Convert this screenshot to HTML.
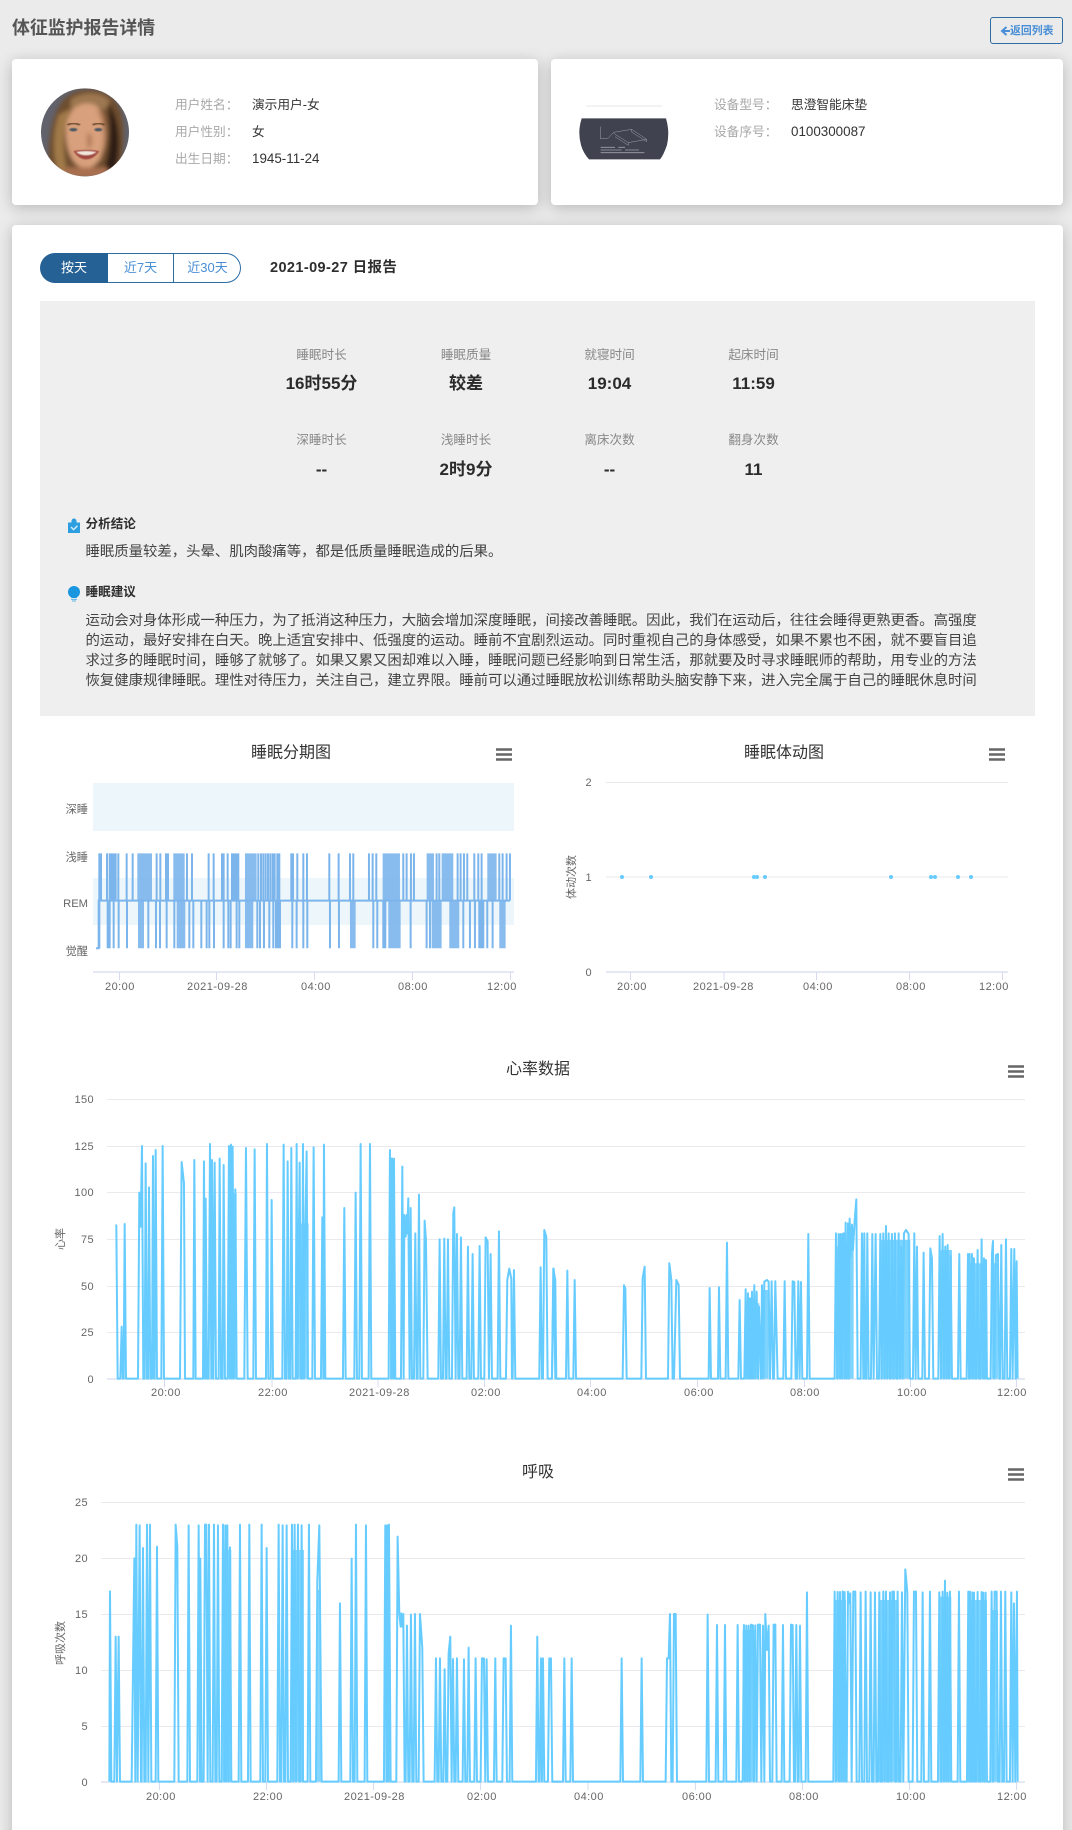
<!DOCTYPE html>
<html lang="zh"><head><meta charset="utf-8"><title>体征监护报告详情</title>
<style>
html,body{margin:0;padding:0;width:1072px;height:1830px;overflow:hidden;background:#ebebeb}
body{position:relative;font-family:"Liberation Sans","Noto Sans CJK SC",sans-serif;color:#333}
.card{position:absolute;background:#fff;border-radius:4px;box-shadow:0 3px 15px rgba(0,0,0,.22)}
.t{position:absolute;white-space:nowrap;line-height:20px;height:20px}
.c{transform:translateX(-50%)}
.lb{color:#a8a8a8;font-size:12.7px}
.v{color:#333;font-size:12.7px}
.n{font-size:13.4px}
.pl{color:#888;font-size:12.6px}
.pv{color:#2b2b2b;font-size:17px;font-weight:700}
.ph{color:#2e2e2e;font-size:12.6px;font-weight:700}
.pt{color:#444;font-size:14.39px}
svg{position:absolute;left:0;top:0}
svg text{font-family:"Liberation Sans","Noto Sans CJK SC",sans-serif}
.tk{font-size:11px;fill:#666;letter-spacing:.45px}
.yl{font-size:11px;fill:#666;text-anchor:end;letter-spacing:.4px}
.ti{font-size:16px;fill:#333;text-anchor:middle}
.ys{font-size:11px;fill:#666;text-anchor:middle}
.l{fill:none;stroke:#66ccff;stroke-width:2;stroke-linejoin:round}
.s{fill:none;stroke:#7cb5ec;stroke-width:2}
.g{stroke:#e9e9ee;stroke-width:1}
.a{stroke:#dbe2f1;stroke-width:1.5}
.k{stroke:#d5dcee;stroke-width:1}
.m{stroke:#666;stroke-width:2.6}
</style></head><body>

<div class="t" style="left:12px;top:16px;height:24px;line-height:24px;font-size:17.9px;font-weight:700;color:#555">体征监护报告详情</div>
<div style="position:absolute;left:990px;top:17px;width:71px;height:25px;border:1px solid #2e6da4;border-radius:3px"></div>
<div class="t" style="left:1010px;top:21px;font-size:10.9px;font-weight:700;color:#4a8fd6">返回列表</div>

<div class="card" style="left:12px;top:59px;width:526px;height:146px"></div>
<div class="card" style="left:551px;top:59px;width:512px;height:146px"></div>
<div class="card" style="left:12px;top:225px;width:1051px;height:1640px"></div>

<div class="t lb" style="left:175px;top:95px">用户姓名：</div><div class="t v" style="left:252px;top:95px">演示用户-女</div>
<div class="t lb" style="left:175px;top:122px">用户性别：</div><div class="t v" style="left:252px;top:122px">女</div>
<div class="t lb" style="left:175px;top:149px">出生日期：</div><div class="t v n" style="left:252px;top:149px">1945-11-24</div>
<div class="t lb" style="left:714px;top:95px">设备型号：</div><div class="t v" style="left:791px;top:95px">思澄智能床垫</div>
<div class="t lb" style="left:714px;top:122px">设备序号：</div><div class="t v n" style="left:791px;top:122px">0100300087</div>

<div style="position:absolute;left:40px;top:253px;width:68px;height:30px;background:#266195;border-radius:15px 0 0 15px"></div>
<div style="position:absolute;left:108px;top:253px;width:132px;height:28px;border:1px solid #2e6da4;border-left:0;border-radius:0 15px 15px 0"></div>
<div style="position:absolute;left:173px;top:253px;width:1px;height:30px;background:#2e6da4"></div>
<div class="t c" style="left:74px;top:258px;font-size:13px;color:#fff">按天</div>
<div class="t c" style="left:140.5px;top:258px;font-size:13px;color:#4a8fd6">近7天</div>
<div class="t c" style="left:207.5px;top:258px;font-size:13px;color:#4a8fd6">近30天</div>
<div class="t" style="left:270px;top:258px;font-size:14.5px;font-weight:700;color:#2e2e2e;letter-spacing:.4px">2021-09-27 日报告</div>

<div style="position:absolute;left:40px;top:301px;width:995px;height:415px;background:#efefef"></div>
<div class="t c pl" style="left:321.5px;top:345px">睡眠时长</div><div class="t c pv" style="left:321.5px;top:374px">16时55分</div>
<div class="t c pl" style="left:466px;top:345px">睡眠质量</div><div class="t c pv" style="left:466px;top:374px">较差</div>
<div class="t c pl" style="left:609.5px;top:345px">就寝时间</div><div class="t c pv" style="left:609.5px;top:374px">19:04</div>
<div class="t c pl" style="left:753.5px;top:345px">起床时间</div><div class="t c pv" style="left:753.5px;top:374px">11:59</div>
<div class="t c pl" style="left:321.5px;top:430px">深睡时长</div><div class="t c pv" style="left:321.5px;top:460px">--</div>
<div class="t c pl" style="left:466px;top:430px">浅睡时长</div><div class="t c pv" style="left:466px;top:460px">2时9分</div>
<div class="t c pl" style="left:609.5px;top:430px">离床次数</div><div class="t c pv" style="left:609.5px;top:460px">--</div>
<div class="t c pl" style="left:753.5px;top:430px">翻身次数</div><div class="t c pv" style="left:753.5px;top:460px">11</div>

<div class="t ph" style="left:85.5px;top:514px">分析结论</div>
<div class="t pt" style="left:85.5px;top:542px">睡眠质量较差，头晕、肌肉酸痛等，都是低质量睡眠造成的后果。</div>
<div class="t ph" style="left:85.5px;top:582px">睡眠建议</div>
<div class="t pt" style="left:85.5px;top:611px">运动会对身体形成一种压力，为了抵消这种压力，大脑会增加深度睡眠，间接改善睡眠。因此，我们在运动后，往往会睡得更熟更香。高强度</div>
<div class="t pt" style="left:85.5px;top:631px">的运动，最好安排在白天。晚上适宜安排中、低强度的运动。睡前不宜剧烈运动。同时重视自己的身体感受，如果不累也不困，就不要盲目追</div>
<div class="t pt" style="left:85.5px;top:651px">求过多的睡眠时间，睡够了就够了。如果又累又困却难以入睡，睡眠问题已经影响到日常生活，那就要及时寻求睡眠师的帮助，用专业的方法</div>
<div class="t pt" style="left:85.5px;top:671px">恢复健康规律睡眠。理性对待压力，关注自己，建立界限。睡前可以通过睡眠放松训练帮助头脑安静下来，进入完全属于自己的睡眠休息时间</div>

<svg width="1072" height="1830" viewBox="0 0 1072 1830">
<defs>
<clipPath id="av"><circle cx="165" cy="187" r="132"/></clipPath>
<filter id="bl" x="-20%" y="-20%" width="140%" height="140%"><feGaussianBlur stdDeviation="6"/></filter>
<filter id="bl2"><feGaussianBlur stdDeviation="1.5"/></filter>
</defs>

<!-- back arrow -->
<path d="M1010 31H1003M1006.5 27L1002 31L1006.5 35" fill="none" stroke="#4a8fd6" stroke-width="2"/>

<!-- avatar -->
<g transform="translate(30 70) scale(.3333)">
<g clip-path="url(#av)">
<rect x="30" y="50" width="270" height="275" fill="#62626c"/>
<g filter="url(#bl)">
<path d="M60 320C48 230 62 130 105 85C150 45 225 50 258 95C290 140 285 240 262 325H60Z" fill="#6e4d2d"/>
<path d="M232 100C268 135 278 230 252 325H212C238 270 248 180 232 100Z" fill="#2e1f13"/>
<path d="M86 135C68 190 68 250 84 310L112 310C96 240 98 175 122 115Z" fill="#a27a48"/>
<path d="M122 88C160 62 215 64 240 92L226 122C190 96 150 100 122 122Z" fill="#9c7750"/>
<path d="M108 195C104 135 132 100 172 100C210 100 230 135 228 195C226 250 204 292 168 296C132 292 110 250 108 195Z" fill="#d8a07c"/>
<path d="M200 120C224 150 228 220 205 280C222 255 232 180 222 130Z" fill="#a87350"/>
<path d="M105 292L232 292L240 325H95Z" fill="#a86f50"/>
<ellipse cx="178" cy="212" rx="8" ry="24" fill="#b67e5e"/>
</g>
<path d="M112 165Q130 155 150 165M188 165Q206 155 224 165" fill="none" stroke="#5d3f28" stroke-width="5" filter="url(#bl2)"/>
<ellipse cx="130" cy="179" rx="12" ry="5" fill="#4d5862" filter="url(#bl2)"/>
<ellipse cx="205" cy="179" rx="12" ry="5" fill="#4d5862" filter="url(#bl2)"/>
<path d="M130 243Q168 236 208 243Q192 268 168 268Q146 268 130 243Z" fill="#a04a40" filter="url(#bl2)"/>
<path d="M138 246Q168 240 200 246Q186 256 168 256Q150 256 138 246Z" fill="#efe6dc" filter="url(#bl2)"/>
</g></g>

<!-- device -->
<g transform="translate(565 90) scale(.3333)">
<path d="M65 48H290" stroke="#e4e4e4" stroke-width="3"/>
<path d="M50 85H303Q315 125 306 165Q296 195 285 208H72Q55 190 48 165Q37 125 50 85Z" fill="#40424f"/>
<g fill="none" stroke="#9fa1aa" stroke-width="1.500">
<path d="M106 110V146H128L146 127L200 118L245 148L190 158L146 130M200 118V126L245 155V148M150 140L190 166V158"/>
<path d="M107 172H150M160 172H180M107 180H170M180 180H222M107 188H238" stroke-width="2.500"/>
</g>
</g>

<!-- small icons -->
<path d="M68 522.5H71.5V521A2.5 2.5 0 0 1 76.5 521V522.5H80V533H68Z" fill="#2d9fe0"/>
<path d="M71 527L73.6 529.6L77.4 525.8" fill="none" stroke="#cfeaf9" stroke-width="1.5"/>
<circle cx="74" cy="592" r="6" fill="#1a96e0"/><path d="M70 595H78L76.5 598H71.5Z" fill="#1a96e0"/>
<path d="M71 599.4H77M72 601H76" stroke="#5bb7ea" stroke-width="1"/>

<!-- sleep stage -->
<text class="ti" x="291" y="757.5">睡眠分期图</text>
<path class="m" d="M496 749.5H512M496 754.5H512M496 759.5H512"/>
<rect x="93" y="783" width="421" height="48" fill="#ecf6fb"/>
<rect x="93" y="878" width="421" height="47" fill="#ecf6fb"/>
<g style="font-size:11.2px;fill:#666;text-anchor:end"><text x="88" y="813">深睡</text><text x="88" y="861">浅睡</text><text x="88" y="907">REM</text><text x="88" y="955">觉醒</text></g>
<path class="a" d="M93 972H514"/><path class="k" d="M119.500 972V980M216.500 972V980M314.500 972V980M412.500 972V980M510.500 972V980"/>
<text class="tk" x="105" y="990">20:00</text><text class="tk" x="187" y="990">2021-09-28</text><text class="tk" x="301" y="990">04:00</text><text class="tk" x="398" y="990">08:00</text><text class="tk" x="487" y="990">12:00</text>
<g transform="translate(40 730) scale(.3333)">
<path fill="#7cb5ec" fill-opacity=".9" d="M292 370h44v142h-44ZM400 370h34v142h-34ZM615 370h35v142h-35ZM1028 370h52v142h-52ZM1160 370h22v142h-22ZM1205 370h35v142h-35ZM1342 370h28v142h-28ZM294 512h18v143h-18ZM410 512h26v143h-26ZM615 512h25v143h-25ZM930 512h17v143h-17ZM1045 512h37v143h-37ZM1175 512h30v143h-30ZM1228 512h30v143h-30ZM1378 512h19v143h-19Z"/>
<path class="s" vector-effect="non-scaling-stroke" d="M168 655H176V512H1410M178 370V655M183 370V512M201 370V512M209 370V512M213 370V512M218 370V512M222 370V512M227 370V512M235 370V512M260 370V512M278 370V512M350 370V512M361 370V512M378 370V512M384 370V512M441 370V512M456 370V512M506 370V512M521 370V512M546 370V512M551 370V512M563 370V512M576 370V512M581 370V512M586 370V512M591 370V512M595 370V512M655 370V512M663 370V512M670 370V512M677 370V512M684 370V512M691 370V512M698 370V512M704 370V512M712 370V512M718 370V512M754 370V512M759 370V512M772 370V512M790 370V512M801 370V512M868 370V512M896 370V512M930 370V512M940 370V512M987 370V512M998 370V512M1009 370V512M1090 370V512M1100 370V512M1113 370V512M1122 370V512M1190 370V512M1198 370V512M1253 370V512M1262 370V512M1272 370V512M1282 370V512M1303 370V512M1315 370V512M1325 370V512M1378 370V512M1388 370V512M1400 370V512M1410 370V512M203 512V655M209 512V655M221 512V655M236 512V655M261 512V655M325 512V655M348 512V655M360 512V655M380 512V655M403 512V655M460 512V655M448 512V655M484 512V655M500 512V655M508 512V655M522 512V655M551 512V655M565 512V655M572 512V655M590 512V655M598 512V655M652 512V655M660 512V655M672 512V655M688 512V655M700 512V655M708 512V655M714 512V655M720 512V655M757 512V655M770 512V655M790 512V655M802 512V655M870 512V655M897 512V655M1000 512V655M1012 512V655M1030 512V655M1036 512V655M1112 512V655M1160 512V655M1170 512V655M1270 512V655M1290 512V655M1305 512V655M1318 512V655M1324 512V655M1330 512V655M1342 512V655M1358 512V655"/>
</g>

<!-- movement scatter -->
<text class="ti" x="784" y="757.5">睡眠体动图</text>
<path class="m" d="M989 749.500H1005M989 754.500H1005M989 759.500H1005"/>
<path class="g" d="M606 782.500H1008M606 877H1008"/>
<path class="a" d="M606 972H1008"/><path class="k" d="M630.500 972V980M724 972V980M816.500 972V980M909.500 972V980M1002.500 972V980"/>
<text class="yl" x="592" y="786">2</text><text class="yl" x="592" y="881">1</text><text class="yl" x="592" y="976">0</text>
<text class="ys" transform="rotate(-90 575 877)" x="575" y="877">体动次数</text>
<text class="tk" x="617" y="990">20:00</text><text class="tk" x="693" y="990">2021-09-28</text><text class="tk" x="803" y="990">04:00</text><text class="tk" x="896" y="990">08:00</text><text class="tk" x="979" y="990">12:00</text>
<g fill="#66ccff"><circle cx="622" cy="877" r="2"/><circle cx="651" cy="877" r="2"/><circle cx="754" cy="877" r="2"/><circle cx="757" cy="877" r="2"/><circle cx="765" cy="877" r="2"/><circle cx="891" cy="877" r="2"/><circle cx="931" cy="877" r="2"/><circle cx="935" cy="877" r="2"/><circle cx="958" cy="877" r="2"/><circle cx="971" cy="877" r="2"/></g>

<!-- heart rate -->
<text class="ti" x="538" y="1074">心率数据</text>
<path class="m" d="M1008 1066.500H1024M1008 1071.500H1024M1008 1076.500H1024"/>
<path class="g" d="M107 1099.500H1025M107 1146.500H1025M107 1192.500H1025M107 1239.500H1025M107 1286.500H1025M107 1332.500H1025"/>
<path class="a" d="M107 1379H1025"/><path class="k" d="M164.500 1379V1387M272 1379V1387M378 1379V1387M484.500 1379V1387M590.500 1379V1387M697.500 1379V1387M804.500 1379V1387M910.500 1379V1387M1016.500 1379V1387"/>
<text class="yl" x="94" y="1103">150</text><text class="yl" x="94" y="1150">125</text><text class="yl" x="94" y="1196">100</text><text class="yl" x="94" y="1243">75</text><text class="yl" x="94" y="1290">50</text><text class="yl" x="94" y="1336">25</text><text class="yl" x="94" y="1383">0</text>
<text class="ys" transform="rotate(-90 64 1239)" x="64" y="1239">心率</text>
<text class="tk" x="151" y="1396">20:00</text><text class="tk" x="258" y="1396">22:00</text><text class="tk" x="349" y="1396">2021-09-28</text><text class="tk" x="471" y="1396">02:00</text><text class="tk" x="577" y="1396">04:00</text><text class="tk" x="684" y="1396">06:00</text><text class="tk" x="790" y="1396">08:00</text><text class="tk" x="897" y="1396">10:00</text><text class="tk" x="997" y="1396">12:00</text>
<g transform="translate(40 1050) scale(.3333)">
<path fill="#66ccff" fill-opacity=".8" d="M565 986V430H590V986ZM768 986V520H806V986ZM1050 986V480H1064V986Z"/>
<path class="l" vector-effect="non-scaling-stroke" d="M226 526L229 526L233 986H241L245 830L248 986H251L254 522L258 986H294L298 428L302 530L306 288L310 986H314L317 340L321 986H324L327 412L331 986H336L339 318L342 986H344L347 300L351 986H364L368 288L372 986H420L425 336L432 400L435 986H460L463 330L467 986H489L492 334L495 986L497 446L501 986H506L510 282L514 986L516 330L520 986L524 338L528 986H536L539 326L543 986H548L551 345L555 986H563L567 288L570 986L573 284L576 986L578 290L582 986L586 418L590 986H613L618 294L623 986H640L644 298L648 986H678L681 282L685 986H692L695 450L699 986H727L731 284L735 986H740L743 334L747 986H751L754 294L758 986H767L770 282L773 986L775 700L779 338L783 986H786L789 282L792 986L795 600L800 304L804 986H817L821 292L825 986H843L847 502L850 986L852 284L856 986H909L913 474L917 986H943L947 428L951 986H958L962 282L966 986H986L990 282L994 986H1046L1050 300L1054 986L1056 325L1060 986L1062 326L1066 986H1083L1087 350L1091 986L1093 495L1097 560L1100 495L1102 550L1105 445L1109 986L1112 474L1116 986H1122L1126 550L1130 986H1133L1137 434L1141 986H1150L1154 512L1158 570L1163 986H1195L1199 568L1203 986H1209L1213 566L1217 986H1220L1224 568L1228 986H1236L1240 490L1243 472L1247 986L1251 552L1255 986H1259L1263 562L1267 986H1280L1284 590L1288 986H1294L1298 612L1302 986H1315L1319 588L1323 986H1333L1337 562L1343 574L1347 986L1352 612L1356 986H1373L1377 544L1381 986H1398L1402 690L1408 656L1414 686L1416 986H1418L1422 660L1426 986H1498L1502 652L1506 986H1509L1513 540L1519 560L1523 986H1536L1540 656L1546 690L1549 986H1560"/>
</g>
<g transform="translate(552 1050) scale(.3333)">
<path fill="#66ccff" fill-opacity=".85" d="M852 986V590H905V986ZM985 986V570H1075V986ZM1165 986V600H1200V986ZM1250 986V640H1305V986ZM1320 986V640H1338V986ZM578 986V760H622V986ZM630 986V720H650V986Z"/>
<path class="l" vector-effect="non-scaling-stroke" d="M0 986L5 656L10 986H42L46 662L50 986H64L68 690L72 986H212L216 706L220 716L224 986H268L272 685L278 650L282 986H348L352 640L358 690L362 986H366L373 690L380 705L384 986H470L473 714L477 986H498L501 712L505 986H521L525 578L529 986H559L563 750L567 986H577L581 718L584 986L588 730L591 986L594 745L597 986L600 725L603 986L607 706L610 986L614 725L618 986L621 770L627 986L630 706L634 986L637 695L645 690L650 695L654 986L659 694L663 986H666L670 694L677 986H694L698 694L702 986H718L722 694L727 696L731 986H735L739 694L743 986L747 696L751 986H765L769 552L773 986H848L852 550L856 986L860 552L864 986L866 552L870 986L872 552L875 550L878 986L881 518L884 986L888 520L890 986L893 506L896 620L900 524L903 600L908 512L913 448L917 986H926L930 550L934 986L937 550L940 986L943 986L946 550L950 986H957L961 552L965 986L971 552L975 986H981L985 552L989 986L994 550L998 986L1002 528L1006 986L1010 550L1014 986H1016L1020 552L1024 986H1025L1029 550L1033 986H1036L1040 550L1044 986L1048 590L1052 986L1056 550L1062 540L1070 552L1074 986H1083L1087 550L1091 986L1095 590L1099 986H1111L1115 608L1119 986H1131L1135 595L1140 625L1144 986H1159L1163 558L1167 986L1172 552L1176 986L1180 590L1184 986L1187 585L1191 986L1196 618L1200 986H1218L1222 612L1226 986H1244L1248 612L1251 986L1253 612L1256 986L1260 612L1263 986L1266 625L1270 986H1273L1277 600L1281 986H1285L1289 568L1293 986L1296 625L1299 986L1302 630L1305 986H1316L1320 612L1323 573L1327 986L1332 615L1338 612L1342 986H1344L1348 585L1352 986H1358L1362 568L1366 986H1374L1378 597L1382 986L1387 597L1391 986L1394 634L1397 986"/>
</g>

<!-- breathing -->
<text class="ti" x="538" y="1477">呼吸</text>
<path class="m" d="M1008 1469.500H1024M1008 1474.500H1024M1008 1479.500H1024"/>
<path class="g" d="M101 1502.500H1025M101 1558.500H1025M101 1614.500H1025M101 1670.500H1025M101 1726.500H1025"/>
<path class="a" d="M101 1782H1025"/><path class="k" d="M159.500 1782V1790M266.500 1782V1790M373.500 1782V1790M480.500 1782V1790M588 1782V1790M695.500 1782V1790M802.500 1782V1790M909.500 1782V1790M1016.500 1782V1790"/>
<text class="yl" x="88" y="1506">25</text><text class="yl" x="88" y="1562">20</text><text class="yl" x="88" y="1618">15</text><text class="yl" x="88" y="1674">10</text><text class="yl" x="88" y="1730">5</text><text class="yl" x="88" y="1786">0</text>
<text class="ys" transform="rotate(-90 64 1643)" x="64" y="1643">呼吸次数</text>
<text class="tk" x="146" y="1800">20:00</text><text class="tk" x="253" y="1800">22:00</text><text class="tk" x="344" y="1800">2021-09-28</text><text class="tk" x="467" y="1800">02:00</text><text class="tk" x="574" y="1800">04:00</text><text class="tk" x="682" y="1800">06:00</text><text class="tk" x="789" y="1800">08:00</text><text class="tk" x="896" y="1800">10:00</text><text class="tk" x="997" y="1800">12:00</text>
<g transform="translate(40 1450) scale(.3333)">
<path fill="#66ccff" fill-opacity=".8" d="M754 995V300H792V995ZM548 995V300H574V995ZM1036 995V300H1050V995ZM830 995V420H842V995Z"/>
<path class="l" vector-effect="non-scaling-stroke" d="M208 995L210 424L214 995H223L227 560L231 995L236 560L240 995H275L283 325L286 995L289 224L293 995L299 226L303 995H305L309 294L313 995H317L321 224L325 995L330 224L334 995H347L351 290L355 995H403L407 224L412 290L416 995H442L446 226L450 995H472L476 226L480 995L481 326L485 995H491L495 224L499 224L503 995L507 224L511 995H518L522 224L526 995H530L534 226L538 995H545L549 224L553 995L556 226L559 995L562 226L566 995L570 292L574 995H596L600 224L604 995H624L628 224L632 995H661L665 224L669 995H676L680 294L684 995H712L716 224L720 995H724L728 226L732 995H736L740 226L744 995H752L756 224L760 995L764 224L768 995L774 224L778 995H781L785 226L789 995H803L807 224L811 995H828L832 393L838 226L845 995H896L900 460L904 995H931L935 326L939 995H944L948 224L952 995H974L978 226L982 995H1032L1036 226L1040 995L1042 226L1045 995L1047 224L1052 995H1069L1073 260L1078 490L1082 530L1084 490L1087 530L1090 492L1094 995H1097L1101 527L1105 995H1109L1113 494L1117 995H1121L1125 492L1129 995H1136L1140 492L1147 594L1151 995H1184L1188 625L1192 995H1196L1200 625L1204 995H1210L1214 658L1218 995H1222L1226 610L1231 560L1235 995L1239 627L1243 995H1247L1251 625L1255 995H1268L1272 628L1276 995H1282L1286 593L1290 995H1303L1307 625L1311 995H1322L1326 625L1332 625L1336 995L1340 628L1344 995H1362L1366 625L1370 995H1387L1391 625L1397 625L1401 995H1409L1413 527L1417 995H1488L1492 560L1496 995H1499L1503 625L1506 995L1509 625L1513 995H1524L1528 625L1533 625L1537 995H1560"/>
</g>
<g transform="translate(552 1450) scale(.3333)">
<path fill="#66ccff" fill-opacity=".85" d="M572 995V540H610V995ZM848 995V450H882V995ZM980 995V450H1040V995ZM1162 995V440H1198V995ZM1248 995V450H1305V995ZM1318 995V480H1338V995Z"/>
<path class="l" vector-effect="non-scaling-stroke" d="M0 995H33L37 625L41 995H55L59 625L63 995H205L209 625L213 995H265L269 625L273 995H341L345 625L350 625L354 492L358 995L362 995L366 492L371 492L375 995H463L467 494L471 995H491L495 525L499 995H515L519 525L523 995H553L557 525L561 995H572L576 525L579 995L583 527L586 995L590 527L593 995L597 524L603 526L606 995L610 526L614 995L618 524L624 524L628 995L633 527L637 995L640 492L645 600L650 527L654 995H661L665 524L670 524L674 995H689L693 525L697 995H713L717 524L722 525L726 995H729L733 525L737 995H740L744 527L748 995H761L765 427L769 995H844L848 425L852 995L857 426L861 995L864 426L868 995L872 424L875 995L878 426L882 995H884L888 425L892 460L895 430L899 995L904 425L910 425L914 995H922L926 427L930 995H937L941 425L945 995H952L956 427L960 995H965L969 427L973 995H978L982 427L986 995H990L994 425L998 995L1002 425L1006 995H1010L1014 427L1018 995L1021 425L1026 425L1030 995H1033L1037 425L1041 995H1046L1050 427L1054 995L1060 358L1066 427L1070 995H1082L1086 425L1092 425L1096 995H1108L1112 427L1116 995H1130L1134 425L1138 995H1158L1162 427L1166 995H1168L1172 425L1176 995L1179 392L1183 995L1186 428L1190 995L1194 425L1198 995H1217L1221 425L1225 995H1245L1249 425L1252 995L1254 425L1258 995L1261 427L1264 995L1266 428L1270 995H1273L1277 426L1281 995H1285L1289 426L1292 995L1294 428L1298 995L1301 428L1305 995H1315L1319 425L1323 995H1324L1328 425L1334 425L1338 995H1343L1347 425L1351 995H1356L1360 425L1364 995H1374L1378 427L1382 995L1386 460L1390 995L1395 425L1397 995"/>
</g>
</svg>
</body></html>
